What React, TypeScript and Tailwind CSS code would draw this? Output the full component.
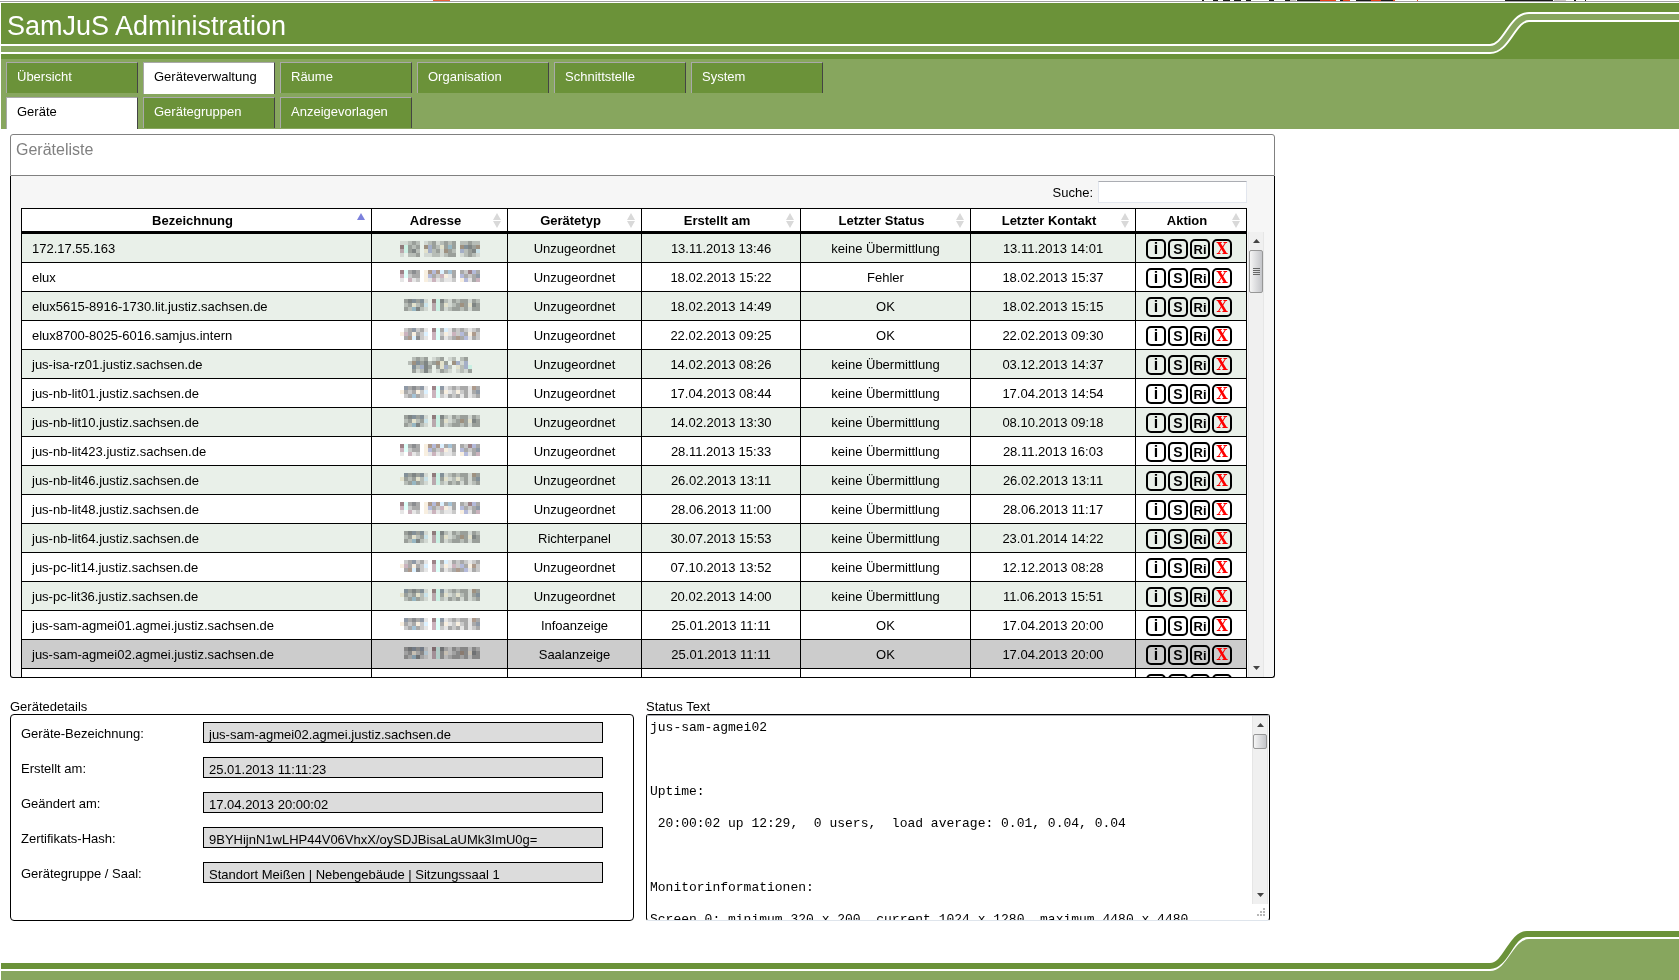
import React, { useState } from 'react';

interface Device {
  name: string;
  address: string[];
  type: string;
  created: string;
  status: string;
  contact: string;
}

const MAIN_TABS = ['Übersicht', 'Geräteverwaltung', 'Räume', 'Organisation', 'Schnittstelle', 'System'];
const SUB_TABS = ['Geräte', 'Gerätegruppen', 'Anzeigevorlagen'];

// Colours of the blocks that hide the addresses
const BLOCKS: Record<string, string> = {
  a: '#8b8d90',
  b: '#a9a9a9',
  c: '#c9c9c9',
  d: '#e6e6e6',
  m: '#9d8388',
  r: '#cbb3bd',
  t: '#ad9a8c',
  y: '#f8efe0',
  u: '#b4bada',
  v: '#8f99a6',
  g: '#a5c3d6',
  s: '#dcf1ff',
  k: '#ddfff9',
};

const LONG_A = ['ddcbc.dcbdcbcb.ccbcc', 'mkbcb.tubcybgb.tvabt', 'rkbac.yucbdtbc.ucbas', 'd.ccb.ddccdcbb.dcbcd'];
const LONG_B = ['mkbab.ytutsbgb.bcmub', 'rkcbb.yubcrydb.ubcbv', 'd.rdc.ydrdcddc.yudbr'];
const MID_A = ['.bavbvd.mkacdbcbbdbc', '.cbycbs.rkbydcbtbyab', '.bcgacd.rkbdcbbcbdbb'];
const MID_B = ['.cbvcbd.mkbsdbcbcdcb', 'yrbybcs.rkcydrcubytc', '.btsacd.rkbdcbtbudbc'];
const MID_C = ['.vbabvd.mkvdcbcbbdtb', 'ybcbycs.rkbydcycbdbv', '.cbgbcd.rkcdbcbdbdcb'];
const SHORT = ['...cbcb.dcb.dc.cb', '..ctvbacbtyb.tudu', '...vcuab.byuc.ycuk', '...bdcac.dbcd.dcdb'];

const DEVICES: Device[] = [
  { name: '172.17.55.163', address: LONG_A, type: 'Unzugeordnet', created: '13.11.2013 13:46', status: 'keine Übermittlung', contact: '13.11.2013 14:01' },
  { name: 'elux', address: LONG_B, type: 'Unzugeordnet', created: '18.02.2013 15:22', status: 'Fehler', contact: '18.02.2013 15:37' },
  { name: 'elux5615-8916-1730.lit.justiz.sachsen.de', address: MID_A, type: 'Unzugeordnet', created: '18.02.2013 14:49', status: 'OK', contact: '18.02.2013 15:15' },
  { name: 'elux8700-8025-6016.samjus.intern', address: MID_B, type: 'Unzugeordnet', created: '22.02.2013 09:25', status: 'OK', contact: '22.02.2013 09:30' },
  { name: 'jus-isa-rz01.justiz.sachsen.de', address: SHORT, type: 'Unzugeordnet', created: '14.02.2013 08:26', status: 'keine Übermittlung', contact: '03.12.2013 14:37' },
  { name: 'jus-nb-lit01.justiz.sachsen.de', address: MID_C, type: 'Unzugeordnet', created: '17.04.2013 08:44', status: 'keine Übermittlung', contact: '17.04.2013 14:54' },
  { name: 'jus-nb-lit10.justiz.sachsen.de', address: MID_A, type: 'Unzugeordnet', created: '14.02.2013 13:30', status: 'keine Übermittlung', contact: '08.10.2013 09:18' },
  { name: 'jus-nb-lit423.justiz.sachsen.de', address: LONG_B, type: 'Unzugeordnet', created: '28.11.2013 15:33', status: 'keine Übermittlung', contact: '28.11.2013 16:03' },
  { name: 'jus-nb-lit46.justiz.sachsen.de', address: MID_C, type: 'Unzugeordnet', created: '26.02.2013 13:11', status: 'keine Übermittlung', contact: '26.02.2013 13:11' },
  { name: 'jus-nb-lit48.justiz.sachsen.de', address: LONG_B, type: 'Unzugeordnet', created: '28.06.2013 11:00', status: 'keine Übermittlung', contact: '28.06.2013 11:17' },
  { name: 'jus-nb-lit64.justiz.sachsen.de', address: MID_A, type: 'Richterpanel', created: '30.07.2013 15:53', status: 'keine Übermittlung', contact: '23.01.2014 14:22' },
  { name: 'jus-pc-lit14.justiz.sachsen.de', address: MID_B, type: 'Unzugeordnet', created: '07.10.2013 13:52', status: 'keine Übermittlung', contact: '12.12.2013 08:28' },
  { name: 'jus-pc-lit36.justiz.sachsen.de', address: MID_C, type: 'Unzugeordnet', created: '20.02.2013 14:00', status: 'keine Übermittlung', contact: '11.06.2013 15:51' },
  { name: 'jus-sam-agmei01.agmei.justiz.sachsen.de', address: MID_C, type: 'Infoanzeige', created: '25.01.2013 11:11', status: 'OK', contact: '17.04.2013 20:00' },
  { name: 'jus-sam-agmei02.agmei.justiz.sachsen.de', address: MID_A, type: 'Saalanzeige', created: '25.01.2013 11:11', status: 'OK', contact: '17.04.2013 20:00' },
  { name: '', address: [], type: '', created: '', status: '', contact: '' },
];

const COLUMNS = [
  { label: 'Bezeichnung', width: 'w-[350px]' },
  { label: 'Adresse', width: 'w-[136px]' },
  { label: 'Gerätetyp', width: 'w-[134px]' },
  { label: 'Erstellt am', width: 'w-[159px]' },
  { label: 'Letzter Status', width: 'w-[170px]' },
  { label: 'Letzter Kontakt', width: 'w-[165px]' },
  { label: 'Aktion', width: 'w-[111px]' },
];

const DETAILS = [
  { id: 'name', label: 'Geräte-Bezeichnung:', value: 'jus-sam-agmei02.agmei.justiz.sachsen.de' },
  { id: 'created', label: 'Erstellt am:', value: '25.01.2013 11:11:23' },
  { id: 'changed', label: 'Geändert am:', value: '17.04.2013 20:00:02' },
  { id: 'hash', label: 'Zertifikats-Hash:', value: '9BYHijnN1wLHP44V06VhxX/oySDJBisaLaUMk3ImU0g=' },
  { id: 'group', label: 'Gerätegruppe / Saal:', value: 'Standort Meißen | Nebengebäude | Sitzungssaal 1' },
];

const STATUS_TEXT = [
  'jus-sam-agmei02',
  '',
  '',
  '',
  'Uptime:',
  '',
  ' 20:00:02 up 12:29,  0 users,  load average: 0.01, 0.04, 0.04',
  '',
  '',
  '',
  'Monitorinformationen:',
  '',
  'Screen 0: minimum 320 x 200, current 1024 x 1280, maximum 4480 x 4480',
].join('\n');

const WindowEdge: React.FC = () => (
  <div className="relative h-[3px] overflow-hidden">
    <svg className="absolute right-0 top-0" width="1679" height="3" aria-hidden="true" shapeRendering="crispEdges">
      <rect x="433" width="17" height="1" fill="#e8603c" />
      <path d="M1202 .5h2M1213 .5h5M1223 .5h7M1234 .5h7M1246 .5h5M1269 .5h5M1285 .5h5M1297 .5h23M1340 .5h3M1356 .5h15M1381 .5h12M1505 .5h48M1574 .5h2M1585 .5h1" stroke="#1a1a1a" />
      <path d="M1320 .5h16M1343 .5h7M1371 .5h10M1393 .5h2M1417 .5h1" stroke="#e8401c" />
      <path d="M1290 .5h6M1554 .5h12" stroke="#c9c4c2" />
    </svg>
    <div className="mt-px h-px bg-[#a0a0a0]" />
  </div>
);

const TabRow: React.FC<{ tabs: string[]; active: string; onSelect: (tab: string) => void }> = ({ tabs, active, onSelect }) => (
  <div className="flex items-start gap-[5px]">
    {tabs.map(tab => (
      <button
        key={tab}
        type="button"
        onClick={() => onSelect(tab)}
        className={`flex w-[132px] border-t border-r border-l border-t-[#a9a9a9] border-r-[#444444] border-l-[#a9a9a9] px-[10px] pt-1 text-left text-[13px] leading-5 ${
          tab === active ? 'h-8 bg-white text-black' : 'h-[31px] bg-[#6b9239] text-white'
        }`}
      >
        {tab}
      </button>
    ))}
  </div>
);

const SortIcon: React.FC<{ sorted?: boolean }> = ({ sorted }) => (
  <svg className="absolute right-[6px] top-[4px]" width="8" height="16" viewBox="0 0 8 16" aria-hidden="true">
    {sorted ? (
      <path d="M4 0 8 7H0z" fill="#7b80dc" />
    ) : (
      <path d="M4 0 8 7H0zM0 8h8L4 15z" fill="#d9d9d9" />
    )}
  </svg>
);

const MaskedAddress: React.FC<{ rows: string[] }> = ({ rows }) => (
  <svg className="mx-auto block mix-blend-multiply" width="80" height="16" viewBox="0 0 80 16" role="img" aria-label="Adresse verborgen" shapeRendering="crispEdges">
    {rows.map((row, y) =>
      row.split('').map((block, x) =>
        BLOCKS[block] ? <rect key={`${x}-${y}`} x={x * 4} y={y * 4} width="4" height="4" fill={BLOCKS[block]} /> : null
      )
    )}
  </svg>
);

const ActionButtons: React.FC = () => {
  const base = 'flex h-5 w-5 items-center justify-center rounded-[5px] border-2 border-black font-bold leading-none';
  return (
    <div className="flex justify-center gap-[2px]">
      <button type="button" aria-label="Info" className={`${base} text-[16px]`}>i</button>
      <button type="button" aria-label="Status" className={`${base} text-[14px]`}>S</button>
      <button type="button" aria-label="Richter" className={`${base} text-[13px]`}>Ri</button>
      <button type="button" aria-label="Löschen" className={`${base} font-['DejaVu_Serif_Condensed','DejaVu_Serif',serif] text-[16px] text-[#ff0000]`}>X</button>
    </div>
  );
};

const Scrollbar: React.FC<{ large?: boolean }> = ({ large }) => (
  <div className="flex w-4 shrink-0 flex-col items-center border-x border-[#e6e6e6] bg-[#f0f0f0]" aria-hidden="true">
    <svg width="7" height="18" viewBox="0 0 7 18">
      <path d="M3.5 7 7 11H0z" fill="#444444" />
    </svg>
    <div
      className={`flex w-[14px] flex-col items-center justify-center gap-px rounded-[2px] border border-[#979797] bg-linear-to-r from-[#f5f5f5] to-[#c4c5c9] ${
        large ? 'h-[43px]' : 'h-[15px]'
      }`}
    >
      {large && [0, 1, 2, 3].map(i => <span key={i} className="h-px w-[7px] bg-[#666666]" />)}
    </div>
    <svg className="mt-auto" width="7" height="18" viewBox="0 0 7 18">
      <path d="M0 7h7l-3.500 4z" fill="#444444" />
    </svg>
  </div>
);

const DeviceTable: React.FC = () => {
  const [selected, setSelected] = useState(14);

  const rowColor = (index: number) => {
    if (index === selected) return 'bg-[#cccccc]';
    return index % 2 === 0 && index < 15 ? 'bg-[#e9f0e9]' : 'bg-white';
  };

  return (
    <table className="w-full table-fixed border-separate border-spacing-0 border-r border-black text-[13px]">
      <thead>
        <tr>
          {COLUMNS.map((column, i) => (
            <th
              key={column.label}
              className={`${column.width} relative h-[26px] border-t border-b-3 border-l border-black bg-white p-0 pt-[2px] pr-2 font-bold leading-5`}
            >
              {column.label}
              <SortIcon sorted={i === 0} />
            </th>
          ))}
        </tr>
      </thead>
      <tbody>
        {DEVICES.map((device, i) => (
          <tr
            key={device.name}
            onClick={() => setSelected(i)}
            className={`${rowColor(i)} text-center *:h-[29px] *:border-b *:border-l *:border-black *:p-0 *:pt-[2px] *:leading-5`}
          >
            <td className="text-left"><span className="pl-[10px]">{device.name}</span></td>
            <td><MaskedAddress rows={device.address} /></td>
            <td>{device.type}</td>
            <td>{device.created}</td>
            <td>{device.status}</td>
            <td>{device.contact}</td>
            <td><div className="pr-1"><ActionButtons /></div></td>
          </tr>
        ))}
      </tbody>
    </table>
  );
};

const App: React.FC = () => {
  const [mainTab, setMainTab] = useState('Geräteverwaltung');
  const [subTab, setSubTab] = useState('Geräte');
  const [search, setSearch] = useState('');

  return (
    <div className="flex min-h-screen flex-col bg-white font-['Liberation_Sans',Arial,sans-serif] text-[13px] text-black">
      <WindowEdge />

      <header className="relative ml-px h-14 overflow-hidden bg-[#6b9239]">
        <svg className="absolute right-0 top-0" width="4000" height="56" fill="none" aria-hidden="true">
          <path d="M0 46H3811C3828 46 3833 14 3850 14H4000" stroke="#ffffff" strokeWidth="10" />
          <path d="M0 46H3811C3828 46 3833 14 3850 14H4000" stroke="#87a65e" strokeWidth="6" />
        </svg>
        <h1 className="relative px-[6px] pt-[7px] text-[27px] leading-8 text-white">SamJuS Administration</h1>
      </header>

      <nav className="ml-px flex h-[70px] flex-col bg-[#87a65e] pt-[3px] pl-[5px]">
        <div className="h-[35px]">
          <TabRow tabs={MAIN_TABS} active={mainTab} onSelect={setMainTab} />
        </div>
        <TabRow tabs={SUB_TABS} active={subTab} onSelect={setSubTab} />
      </nav>

      <main className="px-[10px] pt-[5px]">
        <section className="max-w-[1265px]">
          <div className="h-[42px] rounded-t-[3px] border border-[#808080] px-[5px] pt-[5px]">
            <h2 className="text-[16px] leading-5 text-[#808080]">Geräteliste</h2>
          </div>
          <div className="rounded-b-[3px] border-x border-b border-black bg-[#f6f6f6] px-[10px]">
            <div className="flex items-center justify-end gap-[5px] py-[5px] pr-[17px]">
              <label htmlFor="search" className="pt-[2px]">Suche:</label>
              <input
                id="search"
                type="text"
                value={search}
                onChange={e => setSearch(e.target.value)}
                className="h-[22px] w-[149px] border border-[#e2e6ee] border-t-[#abadb3] bg-white px-1 outline-none"
              />
            </div>
            <div className="flex h-[469px] gap-px overflow-hidden">
              <div className="min-w-0 flex-1">
                <DeviceTable />
              </div>
              <div className="flex pt-6">
                <Scrollbar large />
              </div>
            </div>
          </div>
        </section>

        <div className="mt-5 grid max-w-[1260px] grid-cols-2 gap-3">
          <section>
            <h2 className="h-4 leading-[18px]">Gerätedetails</h2>
            <div className="flex h-[207px] flex-col gap-[14px] rounded-[4px] border border-black px-[10px] pt-[7px]">
              {DETAILS.map(detail => (
                <div key={detail.id} className="flex h-[21px]">
                  <label htmlFor={detail.id} className="w-[182px] leading-[23px]">{detail.label}</label>
                  <input
                    id={detail.id}
                    type="text"
                    readOnly
                    value={detail.value}
                    className="h-[21px] w-[400px] border border-black bg-[#dcdcdc] px-[5px] pt-[4px] outline-none"
                  />
                </div>
              ))}
            </div>
          </section>

          <section>
            <label htmlFor="status" className="block h-4 leading-[18px]">Status Text</label>
            <div className="relative flex h-[207px] rounded-[3px] border border-black border-b-[#dfe5ec]">
              <textarea
                id="status"
                readOnly
                value={STATUS_TEXT}
                className="min-w-0 flex-1 resize-none overflow-hidden border-t border-[#abadb3] pt-[4px] pl-[3px] font-['Liberation_Mono','Courier_New',monospace] text-[13px] leading-4 whitespace-pre outline-none"
              />
              <div className="flex border-t border-[#abadb3] pr-px pb-4">
                <Scrollbar />
              </div>
              <svg className="absolute right-1 bottom-1" width="8" height="8" viewBox="0 0 8 8" fill="#b8b8b8" aria-hidden="true">
                <path d="M6 0h2v2H6zM3 3h2v2H3zM6 3h2v2H6zM0 6h2v2H0zM3 6h2v2H3zM6 6h2v2H6z" />
              </svg>
            </div>
          </section>
        </div>
      </main>

      <footer className="relative mt-auto ml-px h-[49px] overflow-hidden">
        <svg className="absolute right-0 top-0" width="4000" height="49" fill="none" aria-hidden="true">
          <path d="M0 39H3811C3828 39 3833 7 3850 7H4000V49H0z" fill="#87a65e" />
          <path d="M0 39H3811C3828 39 3833 7 3850 7H4000" stroke="#ffffff" strokeWidth="2" />
          <path d="M0 35H3811C3827 35 3832 3 3848 3H4000" stroke="#6b9239" strokeWidth="6" />
        </svg>
      </footer>
    </div>
  );
};

export default App;
